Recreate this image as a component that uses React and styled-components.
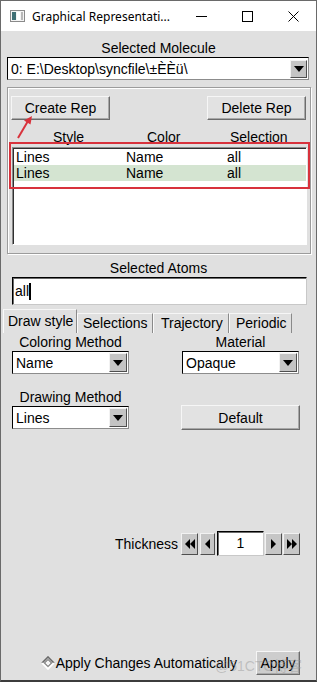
import React from 'react';
import styled, { createGlobalStyle } from 'styled-components';

const Global = createGlobalStyle`
  html, body { margin: 0; padding: 0; background: #ffffff; }
  body { font-family: "Liberation Sans", Arial, sans-serif; font-size: 14px; color: #000; }
  * { box-sizing: border-box; }
`;

const Window = styled.div`
  position: relative;
  width: 317px;
  height: 682px;
  background: #e0e0e0;
  border: 1px solid #6a6a6a;
  border-bottom-width: 2px;
  border-bottom-color: #3c3c3c;
  display: flex;
  flex-direction: column;
  overflow: hidden;
`;

const TitleBar = styled.div`
  height: 30px;
  background: #ffffff;
  display: flex;
  align-items: center;
  flex-shrink: 0;
`;

const TitleIcon = styled.svg`
  margin-left: 9px;
  width: 15px;
  height: 12px;
`;

const TitleText = styled.div`
  margin-left: 7px;
  font-family: "Noto Sans", "Open Sans", sans-serif;
  font-size: 12px;
  color: #000;
  flex: 1;
  white-space: nowrap;
`;

const WinBtn = styled.div`
  width: ${p => p.w}px;
  height: 30px;
  display: flex;
  align-items: center;
  justify-content: center;
`;

const Caption = styled.div`
  height: 18px;
  line-height: 18px;
  text-align: center;
  white-space: nowrap;
`;

const MolRow = styled.div`
  padding: 0 7px 0 6px;
`;

const Combo = styled.div`
  display: flex;
  align-items: center;
  height: 23px;
  width: ${p => p.w ? p.w + 'px' : '100%'};
  background: #ffffff;
  border: 1px solid #000;
  border-right-color: #8c8c8c;
  border-bottom-color: #8c8c8c;
  padding: 0 1px 0 3px;
`;

const ComboText = styled.div`
  flex: 1;
  white-space: nowrap;
  overflow: hidden;
  line-height: 20px;
`;

const ArrowBox = styled.div`
  width: ${p => p.w || 17}px;
  height: ${p => p.h || 18}px;
  background: #c4c4c4;
  border: 1px solid;
  border-color: #f2f2f2 #4e4e4e #4e4e4e #f2f2f2;
  display: flex;
  align-items: center;
  justify-content: center;
`;

const DownTri = () => (
  <svg width="10" height="6" viewBox="0 0 10 6"><polygon points="0,0 10,0 5,6" fill="#000" /></svg>
);

const Frame = styled.div`
  margin: 7px 5px 0 6px;
  border: 1px solid #9c9c9c;
  box-shadow: inset 1px 1px 0 #ffffff, 1px 1px 0 #ffffff;
  padding: 8px 4px 8px 3px;
`;

const BtnRow = styled.div`
  display: flex;
  justify-content: space-between;
`;

const Button = styled.div`
  width: ${p => p.w}px;
  height: ${p => p.h || 24}px;
  background: ${p => p.bg || '#e2e2e2'};
  border: 1px solid;
  border-color: #f6f6f6 #6c6c6c #6c6c6c #f6f6f6;
  box-shadow: inset -1px -1px 0 #a8a8a8;
  display: flex;
  align-items: center;
  justify-content: center;
  white-space: nowrap;
  margin-left: ${p => p.ml || 0}px;
`;

const Header = styled.div`
  margin-top: 8px;
  height: 18px;
  line-height: 18px;
  display: grid;
  grid-template-columns: 94px 83px auto;
  padding-left: 42px;
`;

const List = styled.div`
  margin: 1px 0 0 1px;
  width: 295px;
  height: 98px;
  background: #ffffff;
  border: 1px solid;
  border-color: #8a8a8a #ffffff #ffffff #8a8a8a;
  box-shadow: inset 1px 1px 0 #303030;
  padding: 1px 0 0 1px;
`;

const ListRow = styled.div`
  height: 16px;
  line-height: 16px;
  display: grid;
  grid-template-columns: 110px 101px 1fr;
  padding-left: 2px;
  background: ${p => p.sel ? '#d4e4d1' : 'transparent'};
`;

const AtomsCaption = styled(Caption)`
  margin-top: 5px;
`;

const InputBox = styled.div`
  margin-left: 11px;
  width: 295px;
  height: 28px;
  background: #fff;
  border: 1px solid;
  border-color: #000 #c8c8c8 #c8c8c8 #000;
  box-shadow: inset 1px 1px 0 #6a6a6a;
  display: flex;
  align-items: center;
  padding-left: 2px;
`;

const Cursor = styled.span`
  display: inline-block;
  width: 2px;
  height: 17px;
  background: #000;
`;

const TabBar = styled.div`
  height: 28px;
  display: flex;
  align-items: flex-end;
  padding-left: 2px;
`;

const Tab = styled.div`
  width: ${p => p.w}px;
  height: ${p => p.active ? 24 : 20}px;
  line-height: ${p => p.active ? 22 : 19}px;
  border-top: 1px solid #f6f6f6;
  border-left: 1px solid #fafafa;
  border-right: 1px solid #8a8a8a;
  padding-left: ${p => p.pl}px;
  white-space: nowrap;
`;

const Panel = styled.div`
  flex: 1;
  display: flex;
  flex-direction: column;
  padding-bottom: 5px;
`;

const OptGrid = styled.div`
  display: grid;
  grid-template-columns: 117px 117px;
  column-gap: 53px;
  row-gap: 14px;
  padding-left: 11px;
`;

const OptCell = styled.div`
  display: flex;
  flex-direction: column;
`;

const ThickRow = styled.div`
  margin-top: 101px;
  display: flex;
  align-items: center;
  justify-content: flex-end;
  padding-right: 16px;
  height: 25px;
`;

const ThickLabel = styled.div`
  margin-right: 3px;
`;

const StepBtn = styled.div`
  width: ${p => p.w}px;
  height: 22px;
  background: #c6c6c6;
  border: 1px solid;
  border-color: #f2f2f2 #4e4e4e #4e4e4e #f2f2f2;
  display: flex;
  align-items: center;
  justify-content: center;
  margin-left: ${p => p.ml || 0}px;
`;

const NumInput = styled.div`
  width: 47px;
  height: 25px;
  margin-left: 2px;
  background: #fff;
  border: 1px solid;
  border-color: #000 #c8c8c8 #c8c8c8 #000;
  box-shadow: inset 1px 1px 0 #6a6a6a;
  text-align: center;
  line-height: 22px;
`;

const BottomRow = styled.div`
  margin-top: auto;
  display: flex;
  align-items: center;
  justify-content: flex-end;
  padding-right: 16px;
  height: 24px;
`;

const Check = styled.div`
  display: flex;
  align-items: center;
  white-space: nowrap;
  margin-right: 19px;
`;

const Watermark = styled.div`
  position: absolute;
  left: 214px;
  top: 654px;
  font-family: "Liberation Sans", "Noto Sans CJK SC", sans-serif;
  font-size: 14px;
  color: rgba(150, 150, 150, 0.45);
  white-space: nowrap;
  pointer-events: none;
`;

const RedBox = styled.div`
  position: absolute;
  left: 8px;
  top: 141px;
  width: 301px;
  height: 47px;
  border: 2px solid #d8323c;
  pointer-events: none;
`;

const RedArrow = styled.svg`
  position: absolute;
  left: 12px;
  top: 112px;
  width: 24px;
  height: 30px;
  pointer-events: none;
`;

const Tri = ({ dir }) => (
  <svg width="5" height="10" viewBox="0 0 5 10">
    <polygon points={dir === 'l' ? '5,0 5,10 0,5' : '0,0 0,10 5,5'} fill="#000" />
  </svg>
);

const DoubleTri = ({ dir }) => (
  <svg width="10" height="10" viewBox="0 0 10 10">
    {dir === 'l' ? (
      <>
        <polygon points="5,0 5,10 0,5" fill="#000" />
        <polygon points="10,0 10,10 5,5" fill="#000" />
      </>
    ) : (
      <>
        <polygon points="0,0 0,10 5,5" fill="#000" />
        <polygon points="5,0 5,10 10,5" fill="#000" />
      </>
    )}
  </svg>
);

const Dropdown = ({ text, w }) => (
  <Combo w={w}>
    <ComboText>{text}</ComboText>
    <ArrowBox w={18} h={19}><DownTri /></ArrowBox>
  </Combo>
);

export default function App() {
  return (
    <>
      <Global />
      <Window>
        <TitleBar>
          <TitleIcon viewBox="0 0 15 12">
            <rect x="0.5" y="0.5" width="14" height="11" fill="#f4f4f4" stroke="#8a8a8a" />
            <rect x="2" y="2" width="4" height="8" fill="#3f6f74" />
            <rect x="7" y="2" width="3" height="8" fill="#ffffff" />
            <rect x="11" y="2" width="2" height="8" fill="#b8b8b8" />
          </TitleIcon>
          <TitleText>Graphical Representati...</TitleText>
          <WinBtn w={46}>
            <svg width="11" height="11" viewBox="0 0 11 11"><line x1="0" y1="5.5" x2="11" y2="5.5" stroke="#000" strokeWidth="1" /></svg>
          </WinBtn>
          <WinBtn w={46}>
            <svg width="11" height="11" viewBox="0 0 11 11"><rect x="0.5" y="0.5" width="10" height="10" fill="none" stroke="#000" strokeWidth="1" /></svg>
          </WinBtn>
          <WinBtn w={46}>
            <svg width="11" height="11" viewBox="0 0 11 11"><path d="M0.5 0.5 L10.5 10.5 M10.5 0.5 L0.5 10.5" stroke="#000" strokeWidth="1" /></svg>
          </WinBtn>
        </TitleBar>

        <Caption style={{ marginTop: 8 }}>Selected Molecule</Caption>
        <MolRow>
          <Combo>
            <ComboText>0: E:\Desktop\syncfile\±ÈÈü\</ComboText>
            <ArrowBox w={17} h={18}><DownTri /></ArrowBox>
          </Combo>
        </MolRow>

        <Frame>
          <BtnRow>
            <Button w={99}>Create Rep</Button>
            <Button w={99}>Delete Rep</Button>
          </BtnRow>
          <Header>
            <span>Style</span>
            <span>Color</span>
            <span>Selection</span>
          </Header>
          <List>
            <ListRow><span>Lines</span><span>Name</span><span>all</span></ListRow>
            <ListRow sel><span>Lines</span><span>Name</span><span>all</span></ListRow>
          </List>
        </Frame>

        <AtomsCaption>Selected Atoms</AtomsCaption>
        <InputBox>all<Cursor /></InputBox>

        <TabBar>
          <Tab active w={74} pl={4}>Draw style</Tab>
          <Tab w={76} pl={5}>Selections</Tab>
          <Tab w={76} pl={7}>Trajectory</Tab>
          <Tab w={63} pl={6}>Periodic</Tab>
        </TabBar>

        <Panel>
          <OptGrid>
            <OptCell>
              <Caption>Coloring Method</Caption>
              <Dropdown text="Name" />
            </OptCell>
            <OptCell>
              <Caption>Material</Caption>
              <Dropdown text="Opaque" />
            </OptCell>
            <OptCell>
              <Caption>Drawing Method</Caption>
              <Dropdown text="Lines" />
            </OptCell>
            <OptCell>
              <Caption />
              <Button w={119} h={25} ml={-1} style={{ marginTop: -1 }}>Default</Button>
            </OptCell>
          </OptGrid>

          <ThickRow>
            <ThickLabel>Thickness</ThickLabel>
            <StepBtn w={17}><DoubleTri dir="l" /></StepBtn>
            <StepBtn w={15} ml={2}><Tri dir="l" /></StepBtn>
            <NumInput>1</NumInput>
            <StepBtn w={17} ml={1}><Tri dir="r" /></StepBtn>
            <StepBtn w={17} ml={1}><DoubleTri dir="r" /></StepBtn>
          </ThickRow>

          <BottomRow>
            <Check>
              <svg width="14" height="14" viewBox="0 0 14 14" style={{ marginRight: 1 }}>
                <polygon points="7,1 13,7 7,13 1,7" fill="#e6e6e6" />
                <polyline points="1,7 7,1 13,7" fill="none" stroke="#6a6a6a" strokeWidth="1.6" />
                <polyline points="1,7 7,13 13,7" fill="none" stroke="#ffffff" strokeWidth="1.6" />
                <polygon points="7,3.5 10.5,7 7,10.5 3.5,7" fill="#f4f4f4" stroke="#1e1e1e" strokeWidth="0.8" />
              </svg>
              Apply Changes Automatically
            </Check>
            <Button w={44} bg="#cdcdcd">Apply</Button>
          </BottomRow>
        </Panel>

        <RedBox />
        <RedArrow viewBox="0 0 24 30">
          <line x1="5" y1="25" x2="15" y2="8" stroke="#d8323c" strokeWidth="2" />
          <polygon points="19,3 17.5,11.5 11,7.5" fill="#d8323c" />
        </RedArrow>
        <Watermark>@51CTO博客</Watermark>
      </Window>
    </>
  );
}
